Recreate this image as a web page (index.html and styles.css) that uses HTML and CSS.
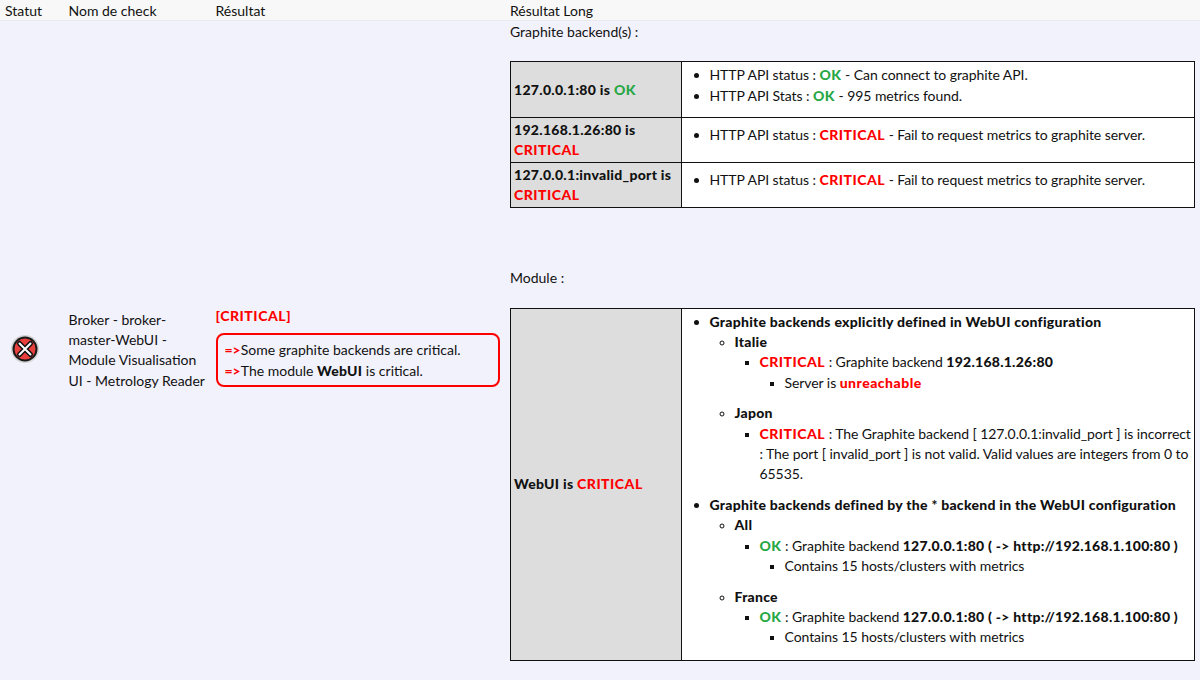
FILE: index.html
```html
<!DOCTYPE html>
<html lang="fr">
<head>
<meta charset="utf-8">
<title>Résultat</title>
<link rel="stylesheet" href="styles.css">
</head>
<body>
<table class="grid">
  <colgroup>
    <col class="c-status"><col class="c-name"><col class="c-result"><col class="c-long">
  </colgroup>
  <thead>
    <tr><th>Statut</th><th>Nom de check</th><th>Résultat</th><th>Résultat Long</th></tr>
  </thead>
  <tbody>
    <tr>
      <td class="status">
        <svg class="icon" width="30" height="30" viewBox="0 0 30 30" aria-hidden="true">
          <circle cx="15" cy="15" r="14" fill="#d4d4d4"/>
          <circle cx="15" cy="15" r="12.5" fill="#1a1a1a"/>
          <circle cx="15" cy="15" r="10.5" fill="#e8403c"/>
          <path d="M9.5 9.5 L20.5 20.5 M20.5 9.5 L9.5 20.5" stroke="#111" stroke-width="5" stroke-linecap="round"/>
          <path d="M9.5 9.5 L20.5 20.5 M20.5 9.5 L9.5 20.5" stroke="#fff" stroke-width="2" stroke-linecap="round"/>
        </svg>
      </td>
      <td>Broker - broker-master-WebUI - Module Visualisation UI - Metrology Reader</td>
      <td class="result">
        <div class="crit-title">[CRITICAL]</div>
        <div class="alert">
          <div><b class="arrow">=&gt;</b>Some graphite backends are critical.</div>
          <div><b class="arrow">=&gt;</b>The module <b>WebUI</b> is critical.</div>
        </div>
      </td>
      <td class="long">
        <p class="lead">Graphite backend(s) :</p>
        <table class="detail">
          <tr class="first">
            <th>127.0.0.1:80 is <span class="ok">OK</span></th>
            <td><ul class="l1 gap">
              <li>HTTP API status : <b class="ok">OK</b> - Can connect to graphite API.</li>
              <li>HTTP API Stats : <b class="ok">OK</b> - 995 metrics found.</li>
            </ul></td>
          </tr>
          <tr>
            <th>192.168.1.26:80 is <span class="crit">CRITICAL</span></th>
            <td><ul class="l1 gap">
              <li>HTTP API status : <b class="crit">CRITICAL</b> - Fail to request metrics to graphite server.</li>
            </ul></td>
          </tr>
          <tr>
            <th>127.0.0.1:invalid_port is <span class="crit">CRITICAL</span></th>
            <td><ul class="l1 gap">
              <li>HTTP API status : <b class="crit">CRITICAL</b> - Fail to request metrics to graphite server.</li>
            </ul></td>
          </tr>
        </table>
        <p class="lead second">Module :</p>
        <table class="detail last">
          <tr>
            <th>WebUI is <span class="crit">CRITICAL</span></th>
            <td>
              <ul class="l1 gap">
                <li><b>Graphite backends explicitly defined in WebUI configuration</b>
                  <ul class="l2">
                    <li><b>Italie</b>
                      <ul class="l3 gap">
                        <li><b class="crit">CRITICAL</b> : Graphite backend <b>192.168.1.26:80</b>
                          <ul class="l3"><li>Server is <b class="crit">unreachable</b></li></ul>
                        </li>
                      </ul>
                    </li>
                    <li><b>Japon</b>
                      <ul class="l3 gap">
                        <li><b class="crit">CRITICAL</b> : The Graphite backend [ 127.0.0.1:invalid_port ] is incorrect : The port [ invalid_port ] is not valid. Valid values are integers from 0 to 65535.</li>
                      </ul>
                    </li>
                  </ul>
                </li>
                <li><b>Graphite backends defined by the * backend in the WebUI configuration</b>
                  <ul class="l2">
                    <li><b>All</b>
                      <ul class="l3 gap">
                        <li><b class="ok">OK</b> : Graphite backend <b>127.0.0.1:80 ( -&gt; http://192.168.1.100:80 )</b>
                          <ul class="l3"><li>Contains 15 hosts/clusters with metrics</li></ul>
                        </li>
                      </ul>
                    </li>
                    <li><b>France</b>
                      <ul class="l3 gap">
                        <li><b class="ok">OK</b> : Graphite backend <b>127.0.0.1:80 ( -&gt; http://192.168.1.100:80 )</b>
                          <ul class="l3"><li>Contains 15 hosts/clusters with metrics</li></ul>
                        </li>
                      </ul>
                    </li>
                  </ul>
                </li>
              </ul>
            </td>
          </tr>
        </table>
      </td>
    </tr>
  </tbody>
</table>
</body>
</html>
```
FILE: styles.css
```css
* { box-sizing: border-box; }
html, body { margin: 0; padding: 0; }
body {
  background: #f2f2fc;
  color: #111;
  font-family: Lato, "Liberation Sans", sans-serif;
  font-size: 14px;
  line-height: 20.4px;
  overflow: hidden;
}
b { font-weight: 900; letter-spacing: .26px; }
.grid { width: 1200px; border-collapse: collapse; table-layout: fixed; }
.c-status { width: 63.5px; }
.c-name { width: 147px; }
.c-result { width: 294.5px; }
.c-long { width: 695px; }
.grid > thead > tr > th {
  background: #f8f8f8;
  border-bottom: 1px solid #e9e9ee;
  font-weight: 400;
  text-align: left;
  line-height: 18px;
  padding: 2px 5px 0;
  height: 20px;
}
.grid > tbody > tr > td { padding: 1px 5px 0; vertical-align: middle; }
.icon { display: block; margin-left: 10px; }
.grid > tbody > tr > td.status { padding: 0 0 2px; }
.grid > tbody > tr > td.result { padding-bottom: 8px; }
.crit-title { color: #f00; font-weight: 900; letter-spacing: .55px; margin-bottom: 7px; }
.alert {
  border: 2px solid #f00;
  border-radius: 8px;
  padding: 5px 7px 4px;
}
.arrow { color: #f00; letter-spacing: 0; }
.crit { color: #f00; letter-spacing: .5px; }
.ok { color: #28a745; letter-spacing: .5px; }
.lead { margin: 0 0 19px; }
.lead.second { margin-top: 60px; margin-bottom: 19px; }
.detail {
  width: 685px;
  border-collapse: collapse;
  table-layout: fixed;
}
.detail.last { margin-bottom: 18px; }
.detail th, .detail td {
  border: 1px solid #111;
  padding: 1.6px 2px 1.6px 2.5px;
  vertical-align: middle;
}
.detail th { width: 171px; background: #ddd; font-weight: 900; letter-spacing: .3px; text-align: left; padding-left: 3px; }
.detail td { background: #fff; letter-spacing: -.07px; }
.detail .first td { padding-top: 3px; padding-bottom: 1px; }
.detail.last td { padding-top: 3px; padding-bottom: 2px; }
ul { margin: 0; padding-left: 25px; }
.l1 { list-style: disc; }
.l2 { list-style: circle; }
.l3 { list-style: square; }
.l2 > li::marker, .l3 > li::marker { font-size: 12px; }
ul.gap { margin-bottom: 10px; }
```
